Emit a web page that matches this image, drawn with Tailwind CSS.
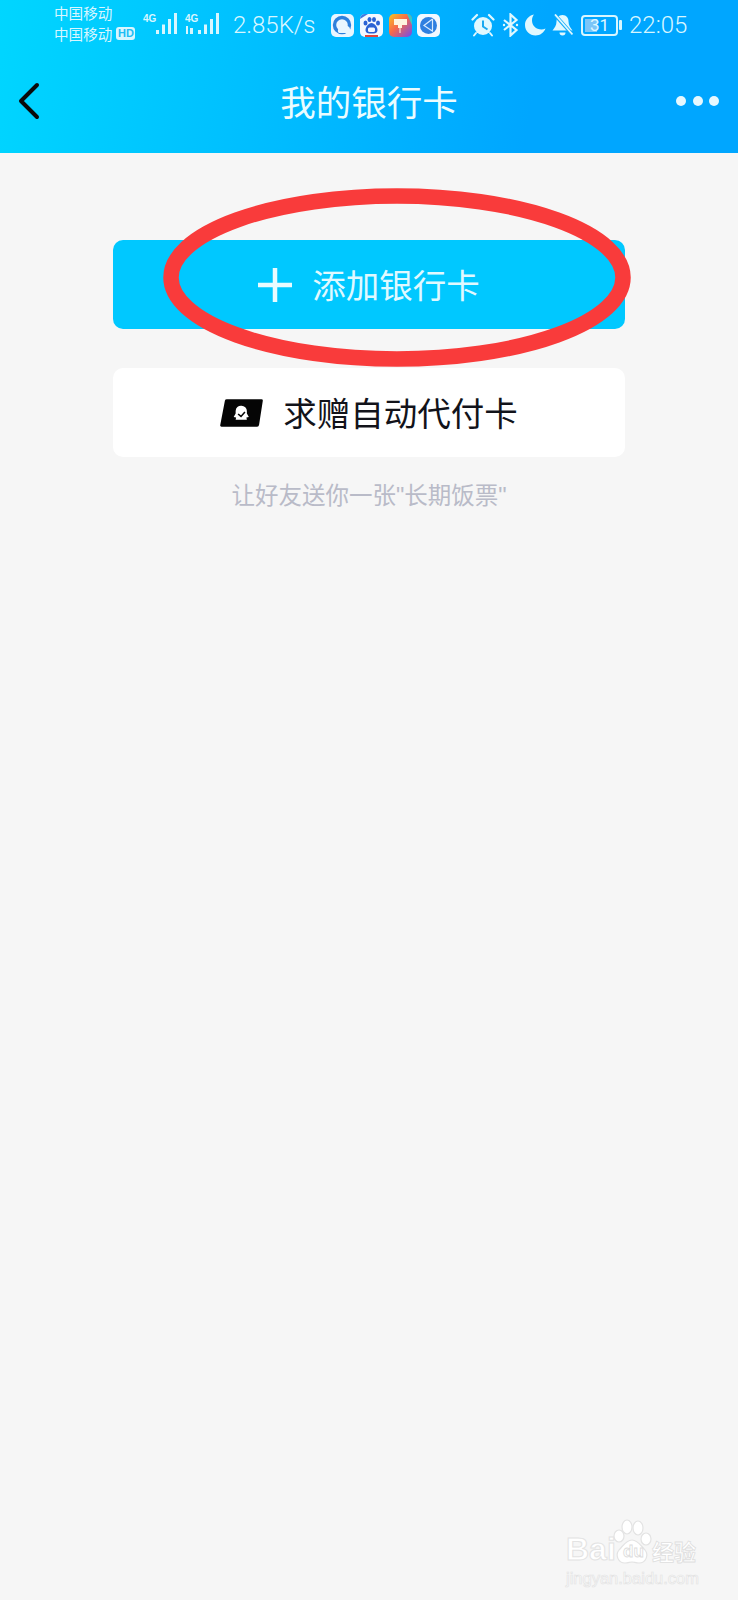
<!doctype html>
<html lang="zh-CN">
<head>
<meta charset="utf-8">
<title>我的银行卡</title>
<script src="https://cdn.jsdelivr.net/npm/@tailwindcss/browser@4"></script>
</head>
<body class="m-0">
<div class="relative w-[738px] h-[1600px] overflow-hidden bg-[#f6f6f6] font-['Noto_Sans_CJK_SC','Noto_Sans',sans-serif]">

  <header class="h-[153px] flex flex-col bg-[linear-gradient(100deg,#00d6ff_0%,#00a6ff_72%)]">
    <!-- status bar -->
    <div class="h-[50px] flex items-center pl-[54px] text-[#d8f6ff]">
      <div class="w-[83px] flex flex-col gap-[3px] text-[14.6px] leading-[18px] -mt-[4px]">
        <div>中国移动</div>
        <div class="flex items-center gap-[4px]">
          <span>中国移动</span>
          <span class="w-[19px] h-[13px] rounded-[3px] bg-[#d8f6ff] text-[#20bdf5] text-[11px] leading-[13px] font-bold text-center font-['Liberation_Sans',sans-serif]">HD</span>
        </div>
      </div>
      <!-- signal 1 -->
      <svg class="ml-[6px] -mt-[2px]" width="36" height="24" viewBox="0 0 36 24" fill="#d8f6ff">
        <text x="0" y="9.500" font-family="Liberation Sans" font-size="10" font-weight="700">4G</text>
        <rect x="13" y="18" width="3" height="4"/><rect x="19" y="12.500" width="3" height="9.500"/><rect x="25" y="7" width="3" height="15"/><rect x="31" y="1" width="3" height="21"/>
      </svg>
      <!-- signal 2 -->
      <svg class="ml-[6px] -mt-[2px]" width="36" height="24" viewBox="0 0 36 24" fill="#d8f6ff">
        <text x="0" y="9.500" font-family="Liberation Sans" font-size="10" font-weight="700">4G</text>
        <rect x="1" y="14" width="2" height="8"/><rect x="5" y="16" width="3" height="6"/><rect x="13" y="18" width="3" height="4"/><rect x="19" y="12.500" width="3" height="9.500"/><rect x="25" y="7" width="3" height="15"/><rect x="31" y="1" width="3" height="21"/>
      </svg>
      <span class="ml-[12px] w-[98px] text-[24px] leading-none font-['Roboto',sans-serif] font-light">2.85K/s</span>

      <!-- app icons -->
      <svg width="23" height="23" viewBox="0 0 23 23">
        <rect width="23" height="23" rx="5" fill="#eaf6ff"/>
        <circle cx="11" cy="11" r="7.500" fill="none" stroke="#2f80dc" stroke-width="3.400"/>
        <path d="M7 18a4 4 0 0 1 5-5 4 4 0 0 1 7 3v3H8z" fill="#eaf6ff"/>
      </svg>
      <svg class="ml-[6px]" width="23" height="24" viewBox="0 0 23 24">
        <rect y="1" width="23" height="23" rx="5" fill="#f4f8ff"/>
        <path d="M0 6a5 5 0 0 1 5-5h3z" fill="#3d78e0"/>
        <ellipse cx="5.500" cy="10" rx="2" ry="2.600" fill="#2b62d4"/><ellipse cx="9.500" cy="6.500" rx="2" ry="2.600" fill="#2b62d4"/><ellipse cx="14" cy="6.500" rx="2" ry="2.600" fill="#2b62d4"/><ellipse cx="18" cy="10" rx="2" ry="2.600" fill="#2b62d4"/>
        <path d="M11.500 10c3 0 6 4 6 7s-2.500 3.500-6 3.500-6-.5-6-3.500 3-7 6-7z" fill="#2b62d4"/>
        <rect x="8" y="14.500" width="7" height="4.500" rx="1.500" fill="#f4f8ff"/>
        <rect x="5" y="22" width="13" height="2" fill="#e2463c"/>
      </svg>
      <svg class="ml-[6px]" width="23" height="23" viewBox="0 0 23 23">
        <defs><linearGradient id="rb" x1="0" y1="0" x2="1" y2="1"><stop offset="0" stop-color="#f7c51e"/><stop offset=".45" stop-color="#f8694a"/><stop offset="1" stop-color="#6d4cf0"/></linearGradient></defs>
        <rect width="23" height="23" rx="5" fill="url(#rb)"/>
        <path d="M18 0h0a5 5 0 0 1 5 5v6z" fill="#37c8c8"/>
        <path d="M5 5h13v6H13v3h-1.500v5h-1v-5H9v-3H5z" fill="#fff4df"/>
      </svg>
      <svg class="ml-[5px]" width="23" height="23" viewBox="0 0 23 23">
        <rect width="23" height="23" rx="5" fill="#f2f8ff"/>
        <circle cx="11.500" cy="11.500" r="8.500" fill="#2f7fe0"/>
        <path d="M15.500 5 7 11.500l9 6M15.500 5v12.500" fill="none" stroke="#d8ecff" stroke-width="1.200"/>
      </svg>

      <!-- alarm -->
      <svg class="ml-[31px]" width="24" height="24" viewBox="0 0 24 24">
        <path d="M1.500 6.500 6 2M22.500 6.500 18 2" stroke="#e0f8ff" stroke-width="2.200" stroke-linecap="round"/>
        <path d="M5 20l-2 2.500M19 20l2 2.500" stroke="#e0f8ff" stroke-width="2" stroke-linecap="round"/>
        <circle cx="12" cy="13" r="9" fill="#e0f8ff"/>
        <path d="M12 7.500V13.500l4.500 3" fill="none" stroke="#1aa8f0" stroke-width="2"/>
      </svg>
      <!-- bluetooth -->
      <svg class="ml-[7px]" width="17" height="24" viewBox="0 0 17 24">
        <path d="M2 7l12.500 10L8.500 22.500V1.500L14.500 7 2 17" fill="none" stroke="#e0f8ff" stroke-width="2.200"/>
        <circle cx="2" cy="12" r="1.200" fill="#e0f8ff"/><circle cx="15" cy="12" r="1.200" fill="#e0f8ff"/>
      </svg>
      <!-- moon -->
      <svg class="ml-[6px]" width="21" height="22" viewBox="0 0 21 22">
        <path d="M9 0.500C3.800 1.500 0 5.800 0 11c0 6 4.800 10.500 10.500 10.500 4.500 0 8.500-2.800 10-7-1.200.6-2.600.9-4 .9C10.800 15.400 7 11.500 7 6.500 7 4.300 7.700 2.200 9 .5z" fill="#e0f8ff"/>
      </svg>
      <!-- muted bell -->
      <svg class="ml-[6px]" width="21" height="23" viewBox="0 0 21 23">
        <path d="M10.500 1c-4 0-6 3-6 6.500 0 4-2 6.500-4 9h20c-2-2.500-4-5-4-9C16.500 4 14.500 1 10.500 1z" fill="#e0f8ff"/>
        <path d="M7.500 18.500h6a3 3 0 0 1-6 0z" fill="#e0f8ff"/>
        <path d="M3.500 1.500 20 20" stroke="#12aaf8" stroke-width="3.500"/>
        <path d="M3 0.500 20.500 20.500" stroke="#e0f8ff" stroke-width="1.800"/>
      </svg>
      <!-- battery -->
      <div class="ml-[8px] relative w-[37px] h-[21px] rounded-[4px] border-2 border-[#d8f6ff] p-[2px] overflow-hidden">
        <div class="w-[12px] h-full bg-[#7cc5f8]"></div>
        <span class="absolute inset-0 text-center text-[17px] leading-[17px] font-['Roboto',sans-serif] text-[#e0f8ff]">31</span>
      </div>
      <div class="ml-[1px] w-[3px] h-[10px] rounded-[1px] bg-[#d8f6ff]"></div>
      <span class="ml-[7px] text-[24px] leading-none font-['Roboto',sans-serif] font-light">22:05</span>
    </div>

    <!-- nav bar -->
    <div class="h-[103px] grid grid-cols-[1fr_auto_1fr] items-center">
      <svg class="ml-[17px] -mt-[2px]" width="24" height="40" viewBox="0 0 24 40">
        <path d="M20 4 4 20l16 16" fill="none" stroke="#0a0a0a" stroke-width="4" stroke-linecap="round" stroke-linejoin="round"/>
      </svg>
      <h1 class="text-[35.500px] leading-none font-normal text-[#eafcff] -mt-[2px]">我的银行卡</h1>
      <div class="flex justify-end gap-[6.500px] pr-[19px] -mt-[1px]">
        <span class="w-[10px] h-[10px] rounded-full bg-[#e6f8ff]"></span>
        <span class="w-[10px] h-[10px] rounded-full bg-[#e6f8ff]"></span>
        <span class="w-[10px] h-[10px] rounded-full bg-[#e6f8ff]"></span>
      </div>
    </div>
  </header>

  <main class="pt-[87px] px-[113px] flex flex-col items-stretch">
    <button class="h-[89px] rounded-[10px] bg-[#00c8ff] flex items-center justify-center gap-[20px]">
      <svg width="34" height="34" viewBox="0 0 34 34"><path d="M0 17h34M17 0v34" stroke="#e8fbff" stroke-width="4.500"/></svg>
      <span class="text-[33.500px] leading-none text-[#e0f9ff] -mt-[2px]">添加银行卡</span>
    </button>
    <button class="mt-[39px] h-[89px] rounded-[10px] bg-white flex items-center justify-center gap-[20px]">
      <svg width="43" height="28" viewBox="0 0 44 28">
        <path d="M5 1.500Q5.300 0 7 0h35.500Q44 0 43.800 1.500L40 26q-.3 2-2 2H1.500Q0 28 .2 26.500z" fill="#050505"/>
        <path d="M22 6.500a5.500 5.500 0 0 1 5.500 5.500v2.500l2 3.500-2.500.5.500 2.500H16l.5-2.500-2.500-.5 2-3.500V12A5.500 5.500 0 0 1 22 6.500z" fill="#fff"/>
        <path d="M18.500 15l3 2.500 4-4.500" fill="none" stroke="#050505" stroke-width="1.600"/>
      </svg>
      <span class="text-[33.500px] leading-none text-[#12131a] -mt-[2px]">求赠自动代付卡</span>
    </button>
    <p class="mt-[22px] text-center text-[23.500px] leading-[30px] text-[#b9bbc8]">让好友送你一张<span class="font-['Liberation_Sans',sans-serif]">"</span>长期饭票<span class="font-['Liberation_Sans',sans-serif]">"</span></p>
  </main>

  <!-- red hand-drawn ellipse annotation -->
  <svg class="absolute left-[155px] top-[180px]" width="484" height="196" viewBox="0 0 484 196">
    <ellipse cx="242" cy="97.500" rx="226" ry="81.500" fill="none" stroke="#f93b3b" stroke-width="15.500"/>
  </svg>

  <!-- watermark -->
  <div class="absolute left-[564px] top-[1518px] w-[138px] h-[68px] text-white">
    <span class="absolute left-[2px] top-[15px] text-[32px] leading-[32px] font-bold font-['Liberation_Sans',sans-serif] [-webkit-text-stroke:1px_#e3e3e3]">Bai</span>
    <svg class="absolute left-[48px] top-[1px]" width="40" height="46" viewBox="0 0 40 46">
      <g fill="#fff" stroke="#e3e3e3" stroke-width="1.200">
        <ellipse cx="7" cy="17" rx="5" ry="6"/><ellipse cx="15" cy="8" rx="5" ry="7"/><ellipse cx="26" cy="9" rx="5" ry="7"/><ellipse cx="34" cy="20" rx="5" ry="6"/>
        <path d="M20 21c6 0 9 6 13 10 4 5 1 13-6 13-3 0-5-1-7-1s-4 1-7 1c-7 0-10-8-6-13 4-4 7-10 13-10z"/>
      </g>
      <text x="11" y="38" font-family="Liberation Sans" font-size="17" font-weight="700" fill="#fff" stroke="#dcdcdc" stroke-width=".8">du</text>
    </svg>
    <span class="absolute left-[88px] top-[17px] text-[22px] leading-[30px] font-bold [-webkit-text-stroke:0.8px_#dedede]">经验</span>
    <span class="absolute left-[2px] top-[50px] text-[16.500px] leading-[20px] font-['Liberation_Sans',sans-serif] [-webkit-text-stroke:0.7px_#e3e3e3]">jingyan.baidu.com</span>
  </div>
</div>
</body>
</html>
